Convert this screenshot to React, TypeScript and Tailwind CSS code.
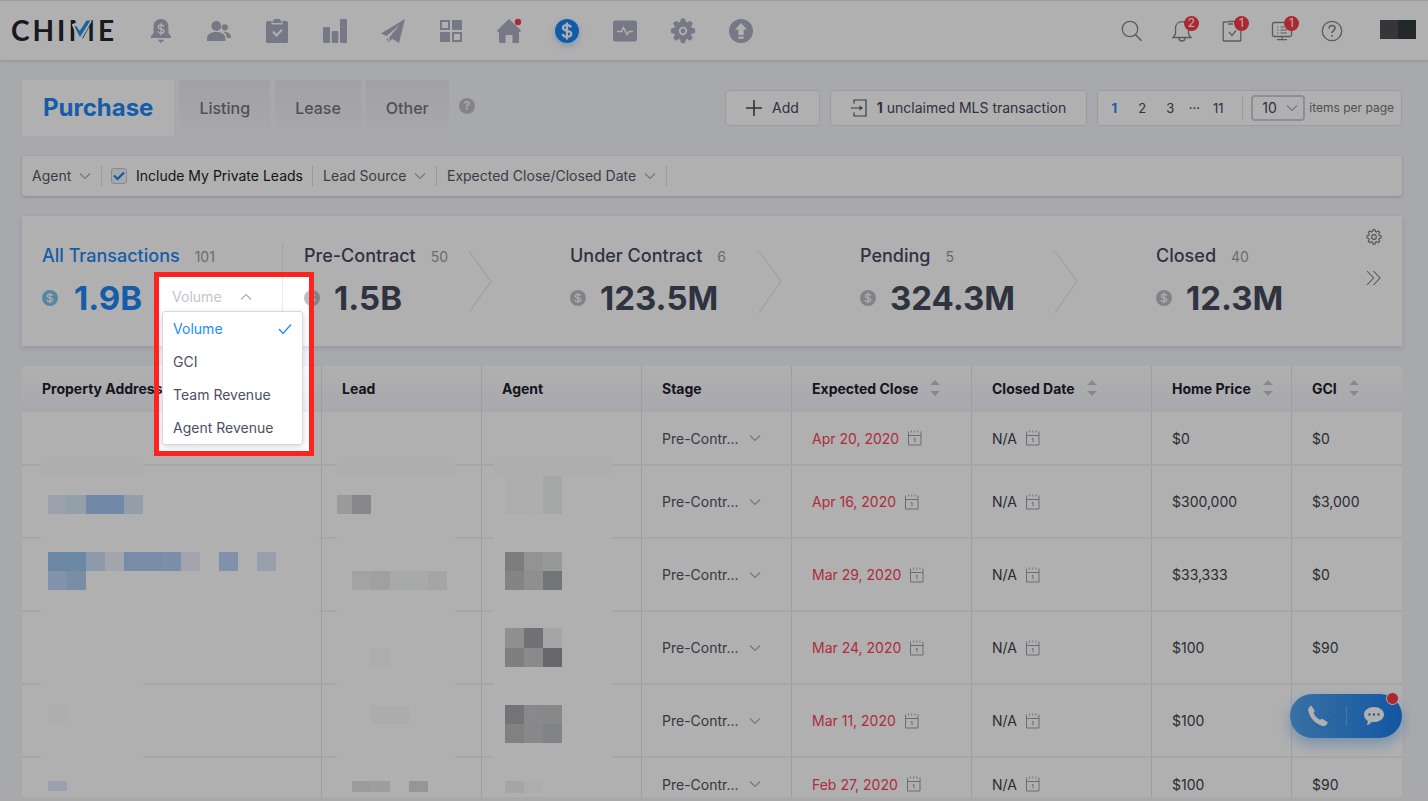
import type { ReactNode } from "react";

type Box = [x: number, y: number, w: number, h: number, fill: string];

const CELL = 19;

const redactions: Box[] = [
  [19, 91, 102, 340, "#ffffff"],
  [19, 153, 278, 114, "#ffffff"],
  [315, 91, 118, 340, "#ffffff"],
  [472, 91, 118, 340, "#ffffff"],
  [19, 91, 102, CELL, "#fcfcfc"],
  [315, 91, 118, CELL, "#fcfcfc"],
  [472, 91, 118, CELL, "#fcfcfc"],
  [26, 129, CELL, CELL, "#dfe9fa"],
  [45, 129, CELL, CELL, "#d6e6f5"],
  [64, 129, 38, CELL, "#a4c6f3"],
  [102, 129, CELL, CELL, "#d6e6f4"],
  [26, 186, 38, CELL, "#9bc5ee"],
  [64, 186, CELL, CELL, "#cce0f8"],
  [83, 186, CELL, CELL, "#ebf0fb"],
  [102, 186, 38, CELL, "#accbf3"],
  [140, 186, CELL, CELL, "#b2d0f8"],
  [159, 186, CELL, CELL, "#ebf0fb"],
  [197, 186, CELL, CELL, "#bbd3f9"],
  [235, 186, CELL, CELL, "#dceaf8"],
  [26, 205, CELL, CELL, "#bbd5f8"],
  [45, 205, CELL, CELL, "#afcef2"],
  [26, 339, CELL, CELL, "#fdfdfd"],
  [26, 415, CELL, 10, "#dfe9fa"],
  [315, 129, 15, CELL, "#dfdfdf"],
  [330, 129, CELL, CELL, "#c5c5c8"],
  [330, 205, CELL, CELL, "#ececec"],
  [349, 205, CELL, CELL, "#e8e8e8"],
  [368, 205, 38, CELL, "#f2f6f5"],
  [406, 205, CELL, CELL, "#efefef"],
  [349, 282, CELL, CELL, "#fbfbfb"],
  [349, 339, 38, CELL, "#fafafa"],
  [330, 415, CELL, 11, "#e1e1e4"],
  [349, 415, CELL, 11, "#e5e5e5"],
  [387, 415, CELL, 11, "#d9d9db"],
  [483, 110, CELL, 38, "#fbfbfb"],
  [502, 110, CELL, 38, "#fdfdfd"],
  [521, 110, CELL, 38, "#f1f4f3"],
  [483, 186, CELL, CELL, "#b4b4b5"],
  [502, 186, CELL, CELL, "#d5d5d8"],
  [521, 186, CELL, CELL, "#dbdfdc"],
  [483, 205, CELL, CELL, "#bebfc2"],
  [502, 205, CELL, CELL, "#cfcfcf"],
  [521, 205, CELL, CELL, "#a7a8af"],
  [483, 262, CELL, 20, "#cfcfd1"],
  [502, 262, CELL, 20, "#a5a5ac"],
  [521, 262, CELL, 20, "#efefef"],
  [483, 282, CELL, CELL, "#b8b8b8"],
  [502, 282, CELL, CELL, "#c9c9cb"],
  [521, 282, CELL, CELL, "#94959b"],
  [483, 339, CELL, CELL, "#a8a7ae"],
  [502, 339, CELL, CELL, "#c5c5cc"],
  [521, 339, CELL, CELL, "#c5c5c5"],
  [483, 358, CELL, CELL, "#bbbbb9"],
  [502, 358, CELL, CELL, "#c5c5c8"],
  [521, 358, CELL, CELL, "#bcbfc4"],
  [483, 415, CELL, 12, "#efefef"],
  [502, 415, CELL, 12, "#fbfbfb"],
];

const rows = [
  { close: "Apr 20, 2020", price: "$0", gci: "$0", height: "h-[54px]" },
  { close: "Apr 16, 2020", price: "$300,000", gci: "$3,000", height: "h-[73px]" },
  { close: "Mar 29, 2020", price: "$33,333", gci: "$0", height: "h-[73px]" },
  { close: "Mar 24, 2020", price: "$100", gci: "$90", height: "h-[73px]" },
  { close: "Mar 11, 2020", price: "$100", gci: "$90", height: "h-[73px]" },
  { close: "Feb 27, 2020", price: "$100", gci: "$90", height: "h-[54px]" },
];

const columns = [
  { name: "Property Address", width: "w-[300px]", sortable: false },
  { name: "Lead", width: "w-[160px]", sortable: false },
  { name: "Agent", width: "w-[160px]", sortable: false },
  { name: "Stage", width: "w-[150px]", sortable: false },
  { name: "Expected Close", width: "w-[180px]", sortable: true },
  { name: "Closed Date", width: "w-[180px]", sortable: true },
  { name: "Home Price", width: "w-[140px]", sortable: true },
  { name: "GCI", width: "", sortable: true },
];

function Chevron({ up = false }: { up?: boolean }) {
  return (
    <svg width="12" height="8" viewBox="0 0 12 8" fill="none" stroke="#a9acb8" strokeWidth="1.1" className="pointer-events-none shrink-0" aria-hidden="true">
      <path d={up ? "M1 6.5 6 1.5l5 5" : "M1 1.5l5 5 5-5"} />
    </svg>
  );
}

function Dollar({ className }: { className: string }) {
  return (
    <svg width="16" height="16" viewBox="0 0 24 24" className={className} aria-hidden="true">
      <circle cx="12" cy="12" r="12" fill="currentColor" />
      <path d="M12 4v16M16 8.8C15.600 7.300 14 6.600 12 6.600c-2.300 0-4 1-4 2.700 0 3.900 8.200 1.600 8.200 5.400 0 1.700-1.800 2.700-4.200 2.700-2.300 0-4-.9-4.300-2.600" fill="none" stroke="#fff" strokeWidth="1.900" />
    </svg>
  );
}

function Calendar() {
  return (
    <svg width="14" height="16" viewBox="0 0 14 16" fill="none" stroke="#9a9da8" aria-hidden="true" className="shrink-0">
      <path d="M.5 3v12h12.500V3M.5 5.500h12.500" />
      <path d="M.5 1.500V3M3.500.5v2M6.700.5v2M10 .5v2M13 1.500V3" strokeWidth=".9" />
      <path d="M5.800 9l1.200-.8v4" />
    </svg>
  );
}

function Sort() {
  return (
    <svg width="10" height="18" viewBox="0 0 10 18" fill="#c6c6c9" className="shrink-0" aria-hidden="true">
      <path d="M5 1l4.800 5H.2zM5 17l4.800-5H.2z" />
    </svg>
  );
}

const GEAR =
  "M10.300 0h3.400l.6 3.200 2 .8 2.700-1.800L21.400 4.600 19.600 7.300l.8 2 3.200.7v3.600l-3.200.6-.8 2 1.800 2.700-2.400 2.400-2.700-1.800-2 .8-.6 3.300h-3.400l-.6-3.300-2-.8-2.700 1.800-2.400-2.400 1.800-2.700-.8-2L.4 13.600V10l3.200-.7.8-2L2.600 4.600 5 2.200 7.700 4l2-.8z";

const navItems: { label: string; icon: ReactNode }[] = [
  {
    label: "Alerts",
    icon: (
      <>
        <path d="M12 0C7.500 0 4.600 3.300 4.600 7.500V14L2 17.300V19h20v-1.700L19.400 14V7.500C19.400 3.300 16.500 0 12 0zM8.500 20.700h7L12 24z" />
        <path d="M12 4.200v12M14.800 7.700c-.4-1.200-1.500-1.700-2.800-1.700-1.600 0-2.800.8-2.800 2 0 2.900 5.800 1.400 5.800 4.200 0 1.200-1.300 2-3 2-1.600 0-2.700-.7-3-1.900" fill="none" stroke="#fff" strokeWidth="1.300" />
      </>
    ),
  },
  {
    label: "People",
    icon: (
      <>
        <circle cx="9.300" cy="7" r="4.900" />
        <path d="M0 22v-2.500C0 15.500 3.500 13 9.200 13s9.200 2.500 9.200 6.500V22z" />
        <circle cx="17.800" cy="8.300" r="3.100" />
        <path d="M16 12.600c5 .2 8 1.800 8 6V19h-4c-.3-3-1.500-5-4-6.400z" />
      </>
    ),
  },
  {
    label: "Tasks",
    icon: (
      <>
        <path d="M3 2h3.500v3.500h11V2H21a2 2 0 0 1 2 2v18.500a1.500 1.500 0 0 1-1.500 1.500h-19A1.500 1.500 0 0 1 1 22.500V4a2 2 0 0 1 2-2z" />
        <path d="M9 0h6v1.500h1.500V4h-9V1.500H9z" />
        <path d="M8 12.500l3.500 4 5.500-6" fill="none" stroke="#fff" strokeWidth="2" />
      </>
    ),
  },
  {
    label: "Reports",
    icon: (
      <>
        <rect x="0" y="8" width="7" height="16" rx="1.200" />
        <rect x="8.700" y="12" width="6.600" height="12" rx="1.200" />
        <rect x="17" y="0" width="7" height="24" rx="1.200" />
      </>
    ),
  },
  {
    label: "Campaigns",
    icon: <path d="M24 0L0 14.500l5.500 2.500L19 5.500 8.500 18l-.3 5 3-3.300L18 24z M7 19l.5 5-2-4z" />,
  },
  {
    label: "Apps",
    icon: (
      <>
        <path d="M1 1h10v10H1zM3 3v6h6V3zM13 13h10v10H13zM15 15v6h6v-6z" fillRule="evenodd" />
        <path d="M13 1h10v10H13zM1 13h10v10H1z" />
      </>
    ),
  },
  {
    label: "Listings",
    icon: (
      <>
        <path d="M12 0l12 11.500-1 1.500h-1v10a1 1 0 0 1-1 1h-5.500v-8h-7v8H3a1 1 0 0 1-1-1V13H1L0 11.500z" />
        <circle cx="21" cy="3" r="3.200" fill="#fd3d4b" />
      </>
    ),
  },
  {
    label: "Transactions",
    icon: (
      <>
        <circle cx="12" cy="12" r="12" fill="#1a86f5" />
        <path d="M12 3.500v17M16 8.300C15.500 6.800 14 6 12 6 9.600 6 8 7.100 8 8.800c0 4.200 8.300 1.800 8.300 6 0 1.900-1.800 3-4.300 3-2.300 0-4-1-4.400-2.800" fill="none" stroke="#fff" strokeWidth="2.200" />
      </>
    ),
  },
  {
    label: "Activity",
    icon: (
      <>
        <rect x="0" y="1.500" width="24" height="21" rx="2.500" />
        <path d="M4 12.500h4.500l2-4 3.500 7 2.300-3H20" fill="none" stroke="#fff" strokeWidth="1.500" />
      </>
    ),
  },
  {
    label: "Settings",
    icon: (
      <>
        <path d={GEAR} strokeLinejoin="round" stroke="currentColor" strokeWidth="1" />
        <circle cx="12" cy="12" r="3.300" fill="none" stroke="#fff" strokeWidth="1.800" />
      </>
    ),
  },
  {
    label: "Upgrade",
    icon: (
      <>
        <circle cx="12" cy="12" r="12" />
        <path d="M12 4l6 6.500h-3.300V16H9.300v-5.500H6zM9.300 17.500h5.400v2.200H9.300z" fill="#fff" />
      </>
    ),
  },
];

const tools: { label: string; badge?: string; icon: ReactNode }[] = [
  {
    label: "Search",
    icon: (
      <>
        <circle cx="10" cy="10" r="7.700" />
        <path d="M15.500 15.700l6 6" strokeWidth="1.600" />
      </>
    ),
  },
  {
    label: "Notifications",
    badge: "2",
    icon: <path d="M3 18.500h18l-2.500-3.500V9.500c0-4-2.600-6.800-6.500-6.800S5.500 5.500 5.500 9.500V15zM9 19c0 1.800 1.200 3 3 3s3-1.200 3-3" />,
  },
  {
    label: "Tasks due",
    badge: "1",
    icon: (
      <>
        <path d="M7.500 3H4a.8.8 0 0 0-.8.8v17.400c0 .4.300.8.800.8h16c.4 0 .8-.4.800-.8V12M8 2.500h7M8 5h5" />
        <path d="M9 13l3 3.500 4-5" />
      </>
    ),
  },
  {
    label: "Messages",
    badge: "1",
    icon: (
      <>
        <path d="M14 3.500H4A1.500 1.500 0 0 0 2.500 5v11A1.500 1.500 0 0 0 4 17.500h16a1.500 1.500 0 0 0 1.500-1.500v-4M12 17.500V20M7 20.700h10" />
        <path d="M7 8h1.500M10.500 8h4M7 11h1.500M10.500 11h6.500M7 14h1.500M10.500 14h6.500" strokeWidth="1.100" />
      </>
    ),
  },
  {
    label: "Help",
    icon: (
      <>
        <circle cx="12" cy="12" r="9.700" />
        <path d="M9 9.500c0-1.900 1.300-3 3-3s3 1.100 3 2.700c0 2.300-3 2.400-3 4.800M12 16v1.800" strokeWidth="1.600" />
      </>
    ),
  },
];

function Header() {
  return (
    <header className="flex h-[60px] shrink-0 items-center border-t border-[#e3e3e3] bg-white pr-3 pl-[11px] shadow-[0_1px_3px_rgba(30,35,60,0.18)]">
      <a href="#home" aria-label="Chime" className="flex w-[138px] items-center gap-[3px] pb-0.5 font-['Lato'] text-[28px] leading-none font-bold text-[#24262b]">
        <span>C</span>
        <span>H</span>
        <span>I</span>
        <span className="relative">
          M
          <svg width="20" height="22" viewBox="0 0 20 22" className="absolute top-1 left-1" aria-hidden="true">
            <path d="M3 3l5 12L17-1" fill="none" stroke="#fff" strokeWidth="7" />
            <path d="M2.500 6.500l1.800-.5 3.400 5L14.500.5h4L8 17z" fill="#2391e6" />
          </svg>
        </span>
        <span>E</span>
      </a>
      <nav className="flex items-center gap-[34px]">
        {navItems.map((item) => (
          <a key={item.label} href={`#${item.label.toLowerCase()}`} aria-label={item.label} className="text-[#abaec1]">
            <svg
              width="24"
              height="24"
              viewBox="0 0 24 24"
              fill="currentColor"
              className={item.label === "Transactions" ? "overflow-visible rounded-full shadow-[0_3px_7px_rgba(32,139,255,0.3)]" : "overflow-visible"}
            >
              {item.icon}
            </svg>
          </a>
        ))}
      </nav>
      <div className="ml-auto flex items-center gap-[26px]">
        {tools.map((tool) => (
          <button key={tool.label} type="button" aria-label={tool.label} className="relative">
            <svg width="24" height="24" viewBox="0 0 24 24" fill="none" stroke="#82858f" strokeWidth="1.300">
              {tool.icon}
            </svg>
            {tool.badge && (
              <span className="absolute -top-[3px] left-[14px] flex h-[15px] w-[15px] items-center justify-center rounded-full bg-[#f93a48] text-[12px] leading-none text-white">
                {tool.badge}
              </span>
            )}
          </button>
        ))}
        <div className="mb-[3px] ml-[10px] flex h-[19px] w-9" aria-hidden="true">
          <span className="flex-1 bg-[#4d4e54]" />
          <span className="flex-1 bg-[#333a3d]" />
        </div>
      </div>
    </header>
  );
}

function Toolbar() {
  return (
    <div className="flex h-14 shrink-0 items-start">
      <div role="tablist" className="flex gap-[5px]">
        <button role="tab" aria-selected="true" type="button" className="h-14 bg-white px-[21px] text-2xl leading-[54px] font-bold text-[#1f86f5]">
          Purchase
        </button>
        {["Listing", "Lease", "Other"].map((tab) => (
          <button
            key={tab}
            role="tab"
            aria-selected="false"
            type="button"
            className="h-14 bg-linear-to-b from-[#ebe9ee] to-[#f4f5f9] px-5 text-base leading-[54px] font-medium text-[#72757f]"
          >
            {tab}
          </button>
        ))}
      </div>
      <span className="mt-[18px] ml-[10px] flex h-4 w-4 items-center justify-center rounded-full bg-[#bfc0c4] text-[12px] leading-none font-bold text-[#f3f5fb]">?</span>
      <div className="mt-[10px] ml-auto flex h-9 gap-[10px] text-sm text-[#454959]">
        <button type="button" className="flex items-center gap-[10px] rounded-[4px] border border-[#e0e2ea] bg-white px-5">
          <svg width="16" height="16" viewBox="0 0 16 16" stroke="#454959" strokeWidth="1.600" aria-hidden="true">
            <path d="M8 0v16M0 8h16" />
          </svg>
          Add
        </button>
        <button type="button" className="flex items-center gap-[10px] rounded-[4px] border border-[#e0e2ea] bg-white px-5">
          <svg width="16" height="18" viewBox="0 0 16 18" fill="none" stroke="#545867" strokeWidth="1.200" aria-hidden="true">
            <path d="M3 4.500V1h12v16H3v-3.500M0 9h10" />
            <path d="M8.500 6.500L12 9l-3.500 2.500z" fill="#545867" stroke="none" />
          </svg>
          <span>
            <b className="font-bold">1</b> unclaimed MLS transaction
          </span>
        </button>
        <div className="flex items-center rounded-[4px] border border-[#e0e2ea] bg-white pr-[7px] text-[13px]">
          <nav aria-label="Pages" className="flex items-center">
            <a href="#p1" className="w-8 text-center font-bold text-[#1f86f5]">1</a>
            <a href="#p2" className="w-6 text-center">2</a>
            <a href="#p3" className="w-8 text-center">3</a>
            <span className="mb-2 w-4 text-center">...</span>
            <a href="#p11" className="w-8 text-center">11</a>
          </nav>
          <span className="mx-2 h-6 w-px bg-[#dfe1e8]" />
          <label className="flex h-[26px] items-center gap-1.5 rounded-[4px] border-2 border-[#cdd0dc] pr-[5px] pl-[9px] text-sm">
            <select aria-label="Items per page" className="appearance-none bg-transparent" defaultValue="10">
              <option>10</option>
              <option>20</option>
            </select>
            <Chevron />
          </label>
          <span className="ml-1 text-[12px] text-[#72757f]">items per page</span>
        </div>
      </div>
    </div>
  );
}

function FilterSelect({ label }: { label: string }) {
  return (
    <label className="flex h-5 items-center gap-[7px] border-r border-[#dcdee6] px-[10px]">
      <select aria-label={label} className="appearance-none bg-transparent">
        <option>{label}</option>
      </select>
      <Chevron />
    </label>
  );
}

function Filters() {
  return (
    <div className="mt-5 flex h-10 shrink-0 items-center rounded-[3px] bg-white text-sm text-[#545867] shadow-[0_1px_3px_rgba(60,60,110,0.25)]">
      <FilterSelect label="Agent" />
      <label className="flex h-5 items-center gap-[9px] border-r border-[#dcdee6] px-[9px] text-[#1d1d20]">
        <span className="relative flex">
          <input type="checkbox" defaultChecked className="h-4 w-4 appearance-none rounded-[3px] border border-[#c3c7d3] bg-[#f0f3f9]" />
          <svg width="16" height="16" viewBox="0 0 16 16" fill="none" stroke="#1a80f0" strokeWidth="2.200" className="pointer-events-none absolute inset-0" aria-hidden="true">
            <path d="M3 7.500l3.500 3.500L13 4.500" />
          </svg>
        </span>
        Include My Private Leads
      </label>
      <FilterSelect label="Lead Source" />
      <FilterSelect label="Expected Close/Closed Date" />
    </div>
  );
}

function VolumeMenu() {
  return (
    <div className="relative mt-1 ml-5 self-start">
      <button type="button" aria-haspopup="listbox" aria-expanded="true" className="flex items-center gap-[18px] px-[10px] text-sm leading-7 text-[#c3c5ce]">
        Volume
        <Chevron up />
      </button>
      <ul role="listbox" aria-label="Amount" className="absolute top-[28px] left-0 z-10 w-[141px] rounded-[3px] border border-[#d8d9de] bg-white text-sm leading-[33px] text-[#4c5062] shadow-[0_2px_6px_rgba(40,45,80,0.18)]">
        <li role="option" aria-selected="true" className="flex items-center justify-between px-[10px] text-[#208bff]">
          Volume
          <svg width="14" height="12" viewBox="0 0 14 12" fill="none" stroke="#208bff" strokeWidth="1.300" aria-hidden="true">
            <path d="M1 6l4 4.500L13 1.500" />
          </svg>
        </li>
        {["GCI", "Team Revenue", "Agent Revenue"].map((option) => (
          <li key={option} role="option" aria-selected="false" className="px-[10px]">
            {option}
          </li>
        ))}
      </ul>
      <div className="pointer-events-none absolute -top-[11px] -left-2 z-50 h-[184px] w-40 border-[5px] border-[#ff231f] shadow-[0_0_0_9999px_rgba(0,0,0,0.31)]" />
    </div>
  );
}

function Stat({ title, count, amount, arrow = true }: { title: string; count: string; amount: string; arrow?: boolean }) {
  return (
    <div className="flex items-start justify-between pl-[21px] text-[#444a5e]">
      <div>
        <h2 className="flex items-baseline text-[18px] leading-6 font-medium whitespace-nowrap">
          {title}
          <span className="ml-[15px] text-sm font-normal text-[#999ba6]">{count}</span>
        </h2>
        <div className="mt-[11px] flex items-center gap-[14px] text-[33px] leading-[38px] font-bold">
          <Dollar className="text-[#bdbec5]" />
          {amount}
        </div>
      </div>
      {arrow && (
        <svg width="24" height="64" viewBox="0 0 24 64" fill="none" stroke="#dedfe3" className="mt-1.5 mr-[57px] shrink-0" aria-hidden="true">
          <path d="M1 1l22 30.500L1 62.500" />
        </svg>
      )}
    </div>
  );
}

function Summary() {
  return (
    <section className="mt-5 grid h-[130px] shrink-0 grid-cols-[261fr_266fr_290fr_296fr_267fr] bg-white pt-7 shadow-[0_2px_6px_rgba(60,60,100,0.14)]">
      <div className="h-[75px] border-r border-[#ebecf0] pl-5 text-[#1f86f5]">
        <h2 className="flex items-baseline text-[18px] leading-6 font-medium whitespace-nowrap">
          All Transactions
          <span className="ml-[15px] text-sm font-normal text-[#999ba6]">101</span>
        </h2>
        <div className="mt-[11px] flex items-center">
          <Dollar className="mr-4 text-[#7cc5ea]" />
          <span className="text-[33px] leading-[38px] font-bold">1.9B</span>
          <VolumeMenu />
        </div>
      </div>
      <Stat title="Pre-Contract" count="50" amount="1.5B" />
      <Stat title="Under Contract" count="6" amount="123.5M" />
      <Stat title="Pending" count="5" amount="324.3M" />
      <div className="flex items-start justify-between pr-5">
        <Stat title="Closed" count="40" amount="12.3M" arrow={false} />
        <div className="-mt-[15px] flex flex-col items-center gap-[25px]">
          <button type="button" aria-label="Pipeline settings">
            <svg width="16" height="16" viewBox="-1 -1 26 26" fill="none" stroke="#797c86" strokeWidth="1.800" strokeLinejoin="round">
              <path d={GEAR} />
              <circle cx="12" cy="12" r="3.800" />
            </svg>
          </button>
          <button type="button" aria-label="More stages">
            <svg width="16" height="16" viewBox="0 0 16 16" fill="none" stroke="#797c86" strokeWidth="1.100">
              <path d="M1 1l6.500 7L1 15M7.500 1L14 8l-6.500 7" />
            </svg>
          </button>
        </div>
      </div>
    </section>
  );
}

const cellClass = "border-r border-b-2 border-r-[#e3e5ea] border-b-[#f1f2f5] px-5 last:border-r-0";

function Transactions() {
  return (
    <div className="relative mt-5 min-h-0 flex-1 overflow-hidden rounded-t-[3px] bg-white">
      <table className="w-full table-fixed border-separate border-spacing-0 text-left text-[14px] text-[#3c3f4c]">
        <thead>
          <tr className="h-[46px] bg-linear-to-b from-white to-[#f3f4fa] text-[#20212f]">
            {columns.map((column) => (
              <th key={column.name} scope="col" className={`${cellClass} ${column.width} font-bold whitespace-nowrap`}>
                <span className="flex items-center gap-3">
                  {column.name}
                  {column.sortable && <Sort />}
                </span>
              </th>
            ))}
          </tr>
        </thead>
        <tbody>
          {rows.map((row) => (
            <tr key={row.close} className={row.height}>
              <td className={cellClass} />
              <td className={cellClass} />
              <td className={cellClass} />
              <td className={cellClass}>
                <label className="flex items-center gap-[10px] text-[#4f5260]">
                  <select aria-label="Stage" className="appearance-none bg-transparent">
                    <option>Pre-Contr...</option>
                  </select>
                  <Chevron />
                </label>
              </td>
              <td className={cellClass}>
                <span className="flex items-center gap-[9px] text-[#fd4058]">
                  {row.close}
                  <Calendar />
                </span>
              </td>
              <td className={cellClass}>
                <span className="flex items-center gap-[9px]">
                  N/A
                  <Calendar />
                </span>
              </td>
              <td className={cellClass}>{row.price}</td>
              <td className={cellClass}>{row.gci}</td>
            </tr>
          ))}
        </tbody>
      </table>
      <svg width="600" height="431" viewBox="0 0 600 431" className="pointer-events-none absolute top-0 left-0" shapeRendering="crispEdges" aria-hidden="true">
        {redactions.map(([x, y, w, h, fill]) => (
          <rect key={`${x}-${y}-${w}-${h}-${fill}`} x={x} y={y} width={w} height={h} fill={fill} />
        ))}
      </svg>
    </div>
  );
}

function ContactDock() {
  return (
    <div className="fixed right-[26px] bottom-[63px] z-20 flex h-11 w-28 items-center justify-between rounded-full bg-linear-to-r from-[#489fee]/95 to-[#1b7eea] px-[17px] shadow-[0_6px_14px_rgba(40,140,240,0.4)]">
      <button type="button" aria-label="Call">
        <svg width="22" height="22" viewBox="0 0 22 22" fill="#fff">
          <path d="M4.500 1L7.800 5.800 6.600 8.300c1.500 2.800 3.500 4.900 6.200 6.500l2.600-1.100 4.900 3.400c.5.400.5.800.3 1.200-1 2-2.600 3-4.500 2.800C8.500 19.500 2.300 12.500 1.200 5.600 1 3.500 2 2 3.600.8c.3-.2.600-.1.900.2z" />
        </svg>
      </button>
      <span className="h-5 w-px bg-white/25" />
      <button type="button" aria-label="Chat">
        <svg width="22" height="20" viewBox="0 0 22 20">
          <path d="M11 1c5.500 0 10 3.200 10 7.500s-4.500 7.600-10 7.600c-.8 0-1.600-.1-2.400-.2C7.500 17.500 6 18.600 3.600 19c.9-1.200 1.300-2.500 1.200-4C2.400 13.500 1 11.200 1 8.500 1 4.200 5.500 1 11 1z" fill="#fff" />
          <path d="M5.500 7.500h2v2h-2zM10 7.500h2v2h-2zM14.500 7.500h2v2h-2z" fill="#1b6fd6" />
        </svg>
      </button>
      <span className="absolute -top-[2px] right-[3px] h-[13px] w-[13px] rounded-full border border-white bg-[#fa3c48]" />
    </div>
  );
}

export default function App() {
  return (
    <div className="flex h-screen flex-col bg-[#f3f5fa] font-['Inter','Liberation_Sans',sans-serif]">
      <Header />
      <main className="flex min-h-0 flex-1 flex-col px-[22px] pt-5 pr-[26px]">
        <Toolbar />
        <Filters />
        <Summary />
        <Transactions />
      </main>
      <footer className="h-1 shrink-0 bg-[#f5f5f5]" />
      <ContactDock />
    </div>
  );
}
